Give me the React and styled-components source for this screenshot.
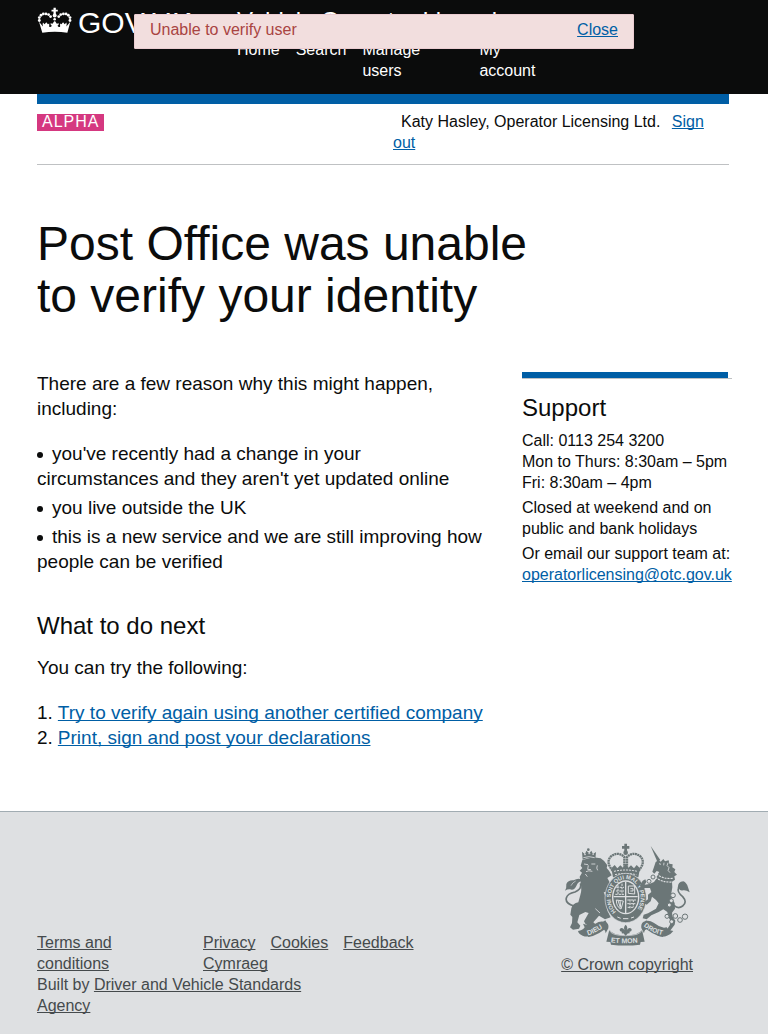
import React, { useState } from "react";
import styled, { createGlobalStyle, css } from "styled-components";

const ink = "#0b0c0c";
const blue = "#005ea5";
const armsGrey = "#6b7677";
const footerBg = "#dee0e2";

const GlobalStyle = createGlobalStyle`
  * { box-sizing: border-box; }
  body {
    margin: 0;
    background: ${footerBg};
    color: ${ink};
    font-family: "Liberation Sans", Arial, sans-serif;
    font-size: 16px;
    line-height: 21px;
  }
  h1, h2, p, ul, ol { margin: 0; padding: 0; font-weight: 400; }
  ul { list-style: none; }
`;

const gutters = css`
  padding-left: 37px;
  padding-right: 39px;
`;

const Link = styled.a`
  color: ${(p) => p.$color || blue};
  text-decoration: underline;
  text-decoration-thickness: 1px;
  text-decoration-skip-ink: none;
  text-underline-offset: 1px;
`;

const Header = styled.header`
  ${gutters}
  display: flex;
  padding-top: 6px;
  padding-bottom: 13px;
  background: ${ink};
  color: #fff;
`;

const Logo = styled.a`
  display: flex;
  gap: 6px;
  flex: 0 0 200px;
  height: 30px;
  margin-top: 1px;
  color: #fff;
  font-size: 30px;
  line-height: 32px;
  text-decoration: none;
`;

const ServiceName = styled.a`
  display: block;
  margin-bottom: 3px;
  color: #fff;
  font-size: 24px;
  line-height: 30px;
  text-decoration: none;
`;

const NavList = styled.ul`
  display: flex;
  gap: 16px;
`;

const NavItem = styled.li`
  width: ${(p) => p.$width || "auto"};
  padding-right: ${(p) => (p.$width ? "16px" : "0")};
  a { color: #fff; text-decoration: none; }
`;

const Toast = styled.div`
  position: absolute;
  top: 14px;
  left: 50%;
  display: flex;
  justify-content: space-between;
  width: 500px;
  max-width: 100%;
  margin-left: -250px;
  padding: 4px 15px 8px;
  border: 1px solid #ebccd1;
  border-radius: 1px;
  background: #f2dede;
  color: #a94442;
`;

const Page = styled.div`
  background: #fff;
`;

const Wrap = styled.div`
  ${gutters}
`;

const PhaseBanner = styled.div`
  display: flex;
  justify-content: space-between;
  align-items: flex-start;
  padding: 7px 0 11px;
  border-top: 10px solid ${blue};
  border-bottom: 1px solid #bfc1c3;
`;

const PhaseTag = styled.strong`
  margin-top: 3px;
  padding: 0 5px 2px;
  background: #d53880;
  color: #fff;
  font-weight: 400;
  letter-spacing: 1px;
  line-height: 15px;
`;

const Account = styled.p`
  width: 336px;
  text-indent: 8px;
  a { margin-left: 7px; }
`;

const Title = styled.h1`
  max-width: 510px;
  margin-top: 53px;
  font-size: 48px;
  line-height: 52px;
`;

const Columns = styled.div`
  display: flex;
  gap: 36px;
  padding: 49px 0 61px;
`;

const Main = styled.main`
  flex: 1;
  font-size: 19px;
  line-height: 25px;
`;

const Heading = styled.h2`
  margin: ${(p) => p.$margin};
  font-size: 24px;
  line-height: 30px;
`;

const Bullets = styled.ul`
  display: grid;
  gap: 4px;
  margin: 20px 0 37px;
`;

const Bullet = styled.li`
  &::before {
    content: "";
    display: inline-block;
    width: 6px;
    height: 6px;
    margin-right: 9px;
    border-radius: 3px;
    background: ${ink};
    vertical-align: 2px;
  }
`;

const Steps = styled.ol`
  margin-top: 20px;
  list-style-position: inside;
  li { display: flex; gap: 5px; counter-increment: step; }
  li::before { content: counter(step) "."; }
`;

const Aside = styled.aside`
  flex: 0 0 207px;
  min-width: 0;
  padding-top: 1px;
`;

const AsideBody = styled.div`
  display: grid;
  gap: 4px;
  width: 210px;
  padding-top: 14px;
  border-top: 1px solid #bfc1c3;
`;

const AsideBar = styled.div`
  height: 6px;
  margin-right: 1px;
  background: ${blue};
`;

const Footer = styled.footer`
  ${gutters}
  display: flex;
  justify-content: space-between;
  align-items: flex-end;
  padding-top: 31px;
  padding-bottom: 17px;
  border-top: 1px solid #a1acb2;
  background: ${footerBg};
  color: #454a4c;
`;

const FooterLinks = styled.div`
  display: flex;
  gap: 15px;
`;

const FooterGroup = styled.ul`
  display: flex;
  flex-wrap: wrap;
  column-gap: 15px;
  width: ${(p) => p.$width};
  padding-right: ${(p) => p.$inset || 0};
`;

const BuiltBy = styled.p`
  max-width: 300px;
`;

const Copyright = styled(Link)`
  display: grid;
  justify-items: center;
  gap: 7px;
  margin: 0 36px 41px 0;
`;

function Crown() {
  const pearls = [
    [117, 63], [117, 54], [122, 47], [129, 43], [137, 43], [145, 45], [151, 51],
    [210, 63], [210, 54], [205, 47], [198, 43], [190, 43], [182, 45], [176, 51],
  ];
  return (
    <svg width="35" height="29" viewBox="110 22 106 88" aria-hidden="true" fill="#fff">
      {pearls.map(([x, y]) => (
        <circle key={`${x}-${y}`} cx={x} cy={y} r="4.300" />
      ))}
      <path d="M160 24h7v6h6v6h-6v7h-7v-7h-6v-6h6z" />
      <circle cx="163.500" cy="48" r="6" />
      <circle cx="163.500" cy="59" r="4" />
      <path d="M116 67l12 14q-2-7 0-12l5 5 5-6 5 6 4-2v10q5 2 8-3-5-3-4-8l6 2 5-8h3l5 8 6-2q1 5-4 8 3 5 8 3v-10l4 2 5-6 5 6 5-5q2 5 0 12l12-14-9 33q-38-6-76 0z" />
    </svg>
  );
}

function RoyalArms() {
  return (
    <svg width="127" height="104" viewBox="28 25 381 312" aria-hidden="true" fill={armsGrey}>
      {/* lion */}
      <path d="M83 76l-5 17 5 7-8 8 7 6-7 12 3 18q4 22-1 37l-6 22q-17 3-21 18l-3 19 6 7-1 18-6 13 9 7 18-3 4-9-9-10 6-22 18-9 10 3-14 25 4 7 17 12 15-2 1-6-9-8 17-20 18 11 17-6-9-18-4-20 0-18-8-20 19 3-6-17 5-15-7-13 13-8-8-14-7-8 2-8q-8-14-20-21l-23-3z" />
      <g stroke={footerBg} strokeWidth="2.500" fill="none">
        <path d="M88 88l12 2m10-2l12 0M101 92l-2 12 10 1M94 111q8-5 19-1M128 92q-4 9 1 15M92 118l6 8M122 222l14 13" />
      </g>
      <path d="M84 75l-2-24 9 8 4-11 9 8 6-8 5 10 9-6-2 22q-18-8-38 1z" />
      <circle cx="101" cy="45" r="4" />
      <path d="M86 69q17-6 34 0M88 60h6m7-3h6m6 2h5" stroke={footerBg} strokeWidth="2.500" fill="none" />
      <path d="M58 214Q31 206 35 190q3-13 26-18 22-10 16-26" fill="none" stroke={armsGrey} strokeWidth="5" />
      <path d="M31 168q5-8 4-20 6-13 22-11 16-10 31 2-17-2-23 15-6 14-19 10-7-1-15 4z" />
      <path d="M63 139q-10 5-14 14" fill="none" stroke={footerBg} strokeWidth="2" />

      {/* imperial crown */}
      <path d="M209 27h8v7h7v8h-7v7h-8v-7h-7v-8h7z" />
      <circle cx="213" cy="54" r="7" />
      <path d="M174 108Q152 82 169 65q22-16 40 2v32M252 108q22-26 5-43-22-16-40 2v32" fill="none" stroke={armsGrey} strokeWidth="7" strokeDasharray="6 1.500" />
      <path d="M170 101l10-10 8 10 9-9 8 7 8-12 8 12 8-7 9 9 8-10 10 10-5 27q-39-9-76 0z" />
      <path d="M178 110q35-8 70 0M181 120q32-7 64 0" fill="none" stroke={footerBg} strokeWidth="3" strokeDasharray="6 3" />

      {/* garter */}
      <ellipse cx="213" cy="190" rx="62" ry="74" stroke={footerBg} strokeWidth="2" />
      <ellipse cx="213" cy="188" rx="41" ry="51" fill={footerBg} />
      <ellipse cx="213" cy="188" rx="37" ry="47" />
      <path id="garter" d="M184 232A45 56 0 1 1 242 232" fill="none" />
      <text fontSize="17" fontWeight="700" fill={footerBg} fontFamily="Liberation Sans, sans-serif">
        <textPath href="#garter">HONI SOIT QUI MAL Y PENSE</textPath>
      </text>
      <g stroke={footerBg} strokeWidth="3" fill="none">
        <path d="M213 141v94M177 186h72" strokeWidth="4" />
        <path d="M185 158h23M184 169h24M182 179h26M190 152v26M202 147v33" strokeDasharray="7 3" />
        <path d="M221 154l19 0v24l-19-2zM227 162h8v7h-8" />
        <path d="M185 196q0 21 14 27l7-24zM190 197l7 22M196 197l2 20" />
        <path d="M218 196h26M218 207h24M219 218h17M226 194v30M236 195v22" strokeDasharray="7 3" />
        <path d="M188 247l10 4m7 1h16m8-2l9-3" />
      </g>

      {/* unicorn */}
      <path d="M288 34l29 42-9 5z" />
      <path d="M303 82L312 76 318 81 326 73 331 80 342 77 344 87 354 89 353 98 362 104 359 112 367 120 359 125 361 135 352 141 353 158 350 176 352 192 360 205 361 222 352 234 354 246 362 258 360 270 348 286 336 286 345 272 349 260 340 246 338 232 326 224 312 232 290 242 276 254 264 251 267 240 280 236 304 222 312 206 304 196 292 186 288 200 276 210 266 204 280 194 280 180 290 172 286 160 270 160 260 166 256 152 264 138 272 134 275 142 270 150 284 148 298 142 304 134 308 120 314 112 306 109 299 117 293 111 297 100z" />
      <path d="M306 118q18 16 49 13M303 128q18 16 50 14" fill="none" stroke={footerBg} strokeWidth="3.500" strokeDasharray="6 3" />
      <path d="M313 87l6 2M340 84q-7 10 3 15-7 9 3 15M328 84l-1 8" fill="none" stroke={footerBg} strokeWidth="2.500" />
      <path d="M358 212q12 12 26 2 15-11 0-28-17-14-13-24 1-11 13-12" fill="none" stroke={armsGrey} strokeWidth="5" />
      <path d="M370 158q-1-17 16-18 10 4 14 18l5 15q-12-8-20-6-9 3-15-9z" />
      <g fill={footerBg} stroke={armsGrey} strokeWidth="3">
        <circle cx="295" cy="127" r="6" />
        <circle cx="283" cy="140" r="6" />
        <circle cx="355" cy="182" r="7" />
        <circle cx="350" cy="198" r="6" />
        <circle cx="344" cy="211" r="6" />
        <circle cx="337" cy="245" r="6" />
        <circle cx="351" cy="261" r="6" />
        <circle cx="362" cy="244" r="7" />
        <circle cx="376" cy="256" r="7" />
        <circle cx="391" cy="246" r="8" />
      </g>

      {/* motto ribbon */}
      <path d="M70 289q14-1 20-11l-5-11q22 7 37 0 15-10 32-4 9 5 7 18l-8 15q-1-14-14-13-18 7-24 18-17 8-31 2-12-4-14-14z" />
      <path d="M88 284q30 0 64-27l9 17q-28 28-60 33z" />
      <path d="M356 289q-14-1-20-11l-8 1q-19-5-31-15-15-10-30-3-9 5-7 19l8 16q1-14 14-13 18 7 24 18 17 8 31 2 12-4 19-14z" />
      <path d="M338 284q-30 0-64-27l-9 17q28 28 60 33z" />
      <path d="M164 285q10 17 49 17t49-17l8 36-12 1-2 8q-43 5-87 0l-2-8-12-1z" />
      <path d="M164 286q5 17 49 17t49-17" fill="none" stroke={footerBg} strokeWidth="2" />
      <path d="M213 270q8 8 3 17 8-12 15-3 1 8-7 7 4 7-4 5l-7 7-7-7q-8 2-4-5-8 1-7-7 7-9 15 3-5-9 3-17z" />
      <path id="motto-left" d="M100 302q24-6 60-34" fill="none" />
      <path id="motto-mid" d="M168 323q45 6 96-1" fill="none" />
      <path id="motto-right" d="M267 274q28 25 74 30" fill="none" />
      <g fontSize="21" fontWeight="700" fill={footerBg} fontFamily="Liberation Sans, sans-serif">
        <text><textPath href="#motto-left">DIEU</textPath></text>
        <text><textPath href="#motto-mid">ET MON</textPath></text>
        <text fontSize="20"><textPath href="#motto-right">DROIT</textPath></text>
      </g>
    </svg>
  );
}

function ErrorToast() {
  const [open, setOpen] = useState(true);
  if (!open) return null;
  const close = (event) => {
    event.preventDefault();
    setOpen(false);
  };
  return (
    <Toast role="alert">
      <span>Unable to verify user</span>
      <Link href="#close" onClick={close}>Close</Link>
    </Toast>
  );
}

const footerLinks = ["Privacy", "Cookies", "Feedback", "Cymraeg"];

export default function App() {
  return (
    <>
      <GlobalStyle />
      <Page>
        <Header>
          <Logo href="#home">
            <Crown />
            <span>GOV.UK</span>
          </Logo>
          <div>
            <ServiceName href="#service">Vehicle Operator Licensing</ServiceName>
            <nav>
              <NavList>
                <NavItem><a href="#home">Home</a></NavItem>
                <NavItem><a href="#search">Search</a></NavItem>
                <NavItem $width="101px"><a href="#users">Manage users</a></NavItem>
                <NavItem $width="82px"><a href="#account">My account</a></NavItem>
              </NavList>
            </nav>
          </div>
        </Header>
        <ErrorToast />
        <Wrap>
          <PhaseBanner>
            <PhaseTag>ALPHA</PhaseTag>
            <Account>
              Katy Hasley, Operator Licensing Ltd. <Link href="#signout">Sign out</Link>
            </Account>
          </PhaseBanner>
          <Title>Post Office was unable to verify your identity</Title>
          <Columns>
            <Main>
              <p>There are a few reason why this might happen, including:</p>
              <Bullets>
                <Bullet>you've recently had a change in your circumstances and they aren't yet updated online</Bullet>
                <Bullet>you live outside the UK</Bullet>
                <Bullet>this is a new service and we are still improving how people can be verified</Bullet>
              </Bullets>
              <Heading $margin="0 0 14px">What to do next</Heading>
              <p>You can try the following:</p>
              <Steps>
                <li><Link href="#verify">Try to verify again using another certified company</Link></li>
                <li><Link href="#print">Print, sign and post your declarations</Link></li>
              </Steps>
            </Main>
            <Aside>
              <AsideBar />
              <AsideBody>
                <Heading $margin="0 0 3px">Support</Heading>
                <p>Call: 0113 254 3200<br />Mon to Thurs: 8:30am – 5pm<br />Fri: 8:30am – 4pm</p>
                <p>Closed at weekend and on public and bank holidays</p>
                <p>
                  Or email our support team at:{" "}
                  <Link href="mailto:operatorlicensing@otc.gov.uk">operatorlicensing@otc.gov.uk</Link>
                </p>
              </AsideBody>
            </Aside>
          </Columns>
        </Wrap>
      </Page>
      <Footer>
        <div>
          <FooterLinks>
            <FooterGroup $width="151px" $inset="40px">
              <li><Link $color="#454a4c" href="#terms">Terms and conditions</Link></li>
            </FooterGroup>
            <FooterGroup $width="240px">
              {footerLinks.map((name) => (
                <li key={name}>
                  <Link $color="#454a4c" href={`#${name.toLowerCase()}`}>{name}</Link>
                </li>
              ))}
            </FooterGroup>
          </FooterLinks>
          <BuiltBy>
            Built by <Link $color="#454a4c" href="#dvsa">Driver and Vehicle Standards Agency</Link>
          </BuiltBy>
        </div>
        <Copyright $color="#454a4c" href="#copyright">
          <RoyalArms />
          <span>© Crown copyright</span>
        </Copyright>
      </Footer>
    </>
  );
}
